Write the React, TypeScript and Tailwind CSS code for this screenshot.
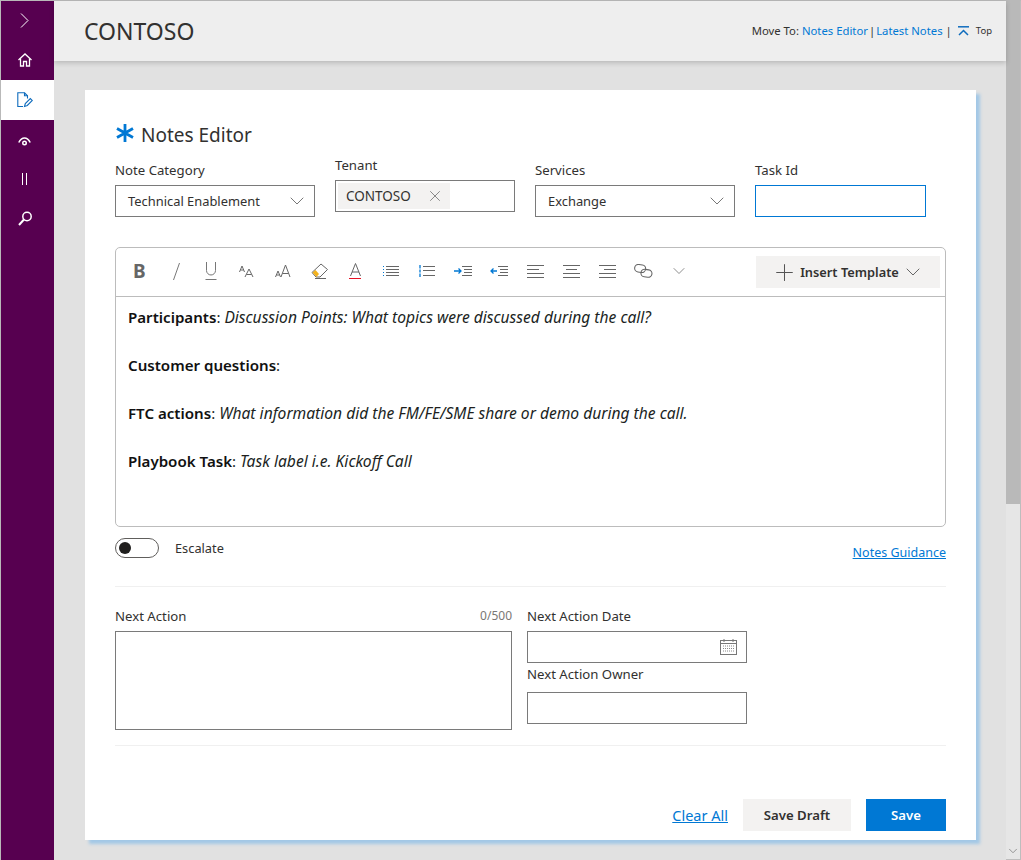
import React from 'react';
import { ChevronDown, X, Plus } from 'lucide-react';

const Label: React.FC<{ children: React.ReactNode; className?: string }> = ({ children, className }) => (
  <div className={`text-[13.2px] leading-[20px] text-[#323130] ${className ?? ''}`}>{children}</div>
);

const Lines: React.FC<{ rows: [number, number][] }> = ({ rows }) => (
  <svg width="17" height="13" viewBox="0 0 17 13" fill="none" stroke="#666" strokeWidth="1">
    {rows.map(([a, b], i) => (
      <line key={i} x1={a} x2={b} y1={i * 4 + 0.5} y2={i * 4 + 0.5} />
    ))}
  </svg>
);

const BulletList = () => (
  <svg width="16" height="11" viewBox="0 0 16 11" fill="none">
    <g stroke="#666">
      <line x1="3" x2="16" y1="0.5" y2="0.5" />
      <line x1="3" x2="16" y1="3.5" y2="3.500" />
      <line x1="3" x2="16" y1="6.5" y2="6.5" />
      <line x1="3" x2="16" y1="9.5" y2="9.5" />
    </g>
    <g fill="#0078d4">
      <rect x="0" y="0" width="1" height="1" />
      <rect x="0" y="3" width="1" height="1" />
      <rect x="0" y="6" width="1" height="1" />
      <rect x="0" y="9" width="1" height="1" />
    </g>
  </svg>
);

const NumberList = () => (
  <svg width="16" height="12" viewBox="0 0 16 12" fill="none">
    <g stroke="#666">
      <line x1="4" x2="16" y1="1.5" y2="1.5" />
      <line x1="4" x2="16" y1="5.5" y2="5.5" />
      <line x1="4" x2="16" y1="10.5" y2="10.5" />
    </g>
    <path d="M1 0v3.500M1 4.500v3M1 8.500v3.500" stroke="#0078d4" strokeWidth="1.300" />
  </svg>
);

const Indent: React.FC<{ reverse?: boolean }> = ({ reverse }) => (
  <svg width="18" height="10" viewBox="0 0 18 10" fill="none">
    <g stroke="#666">
      <line x1="8" x2="18" y1="0.5" y2="0.5" />
      <line x1="10" x2="18" y1="3.5" y2="3.5" />
      <line x1="10" x2="18" y1="6.5" y2="6.5" />
      <line x1="8" x2="18" y1="9.5" y2="9.5" />
    </g>
    {reverse ? (
      <path d="M7 5H1M3.500 2.500L1 5l2.500 2.500" stroke="#0078d4" strokeWidth="1.300" />
    ) : (
      <path d="M0 5h6.500M4.500 2.500L7 5l-2.500 2.500" stroke="#0078d4" strokeWidth="1.300" />
    )}
  </svg>
);

const SmallCaps: React.FC<{ big?: boolean }> = ({ big }) => (
  <svg width="16" height="14" viewBox="0 0 16 14" fill="none" stroke="#666" strokeWidth="1">
    {big ? (
      <>
        <path d="M0.500 13L3 7l2.500 6M1.500 11h3" />
        <path d="M6 13l4.500-12L15 13M7.500 9.500h6" />
      </>
    ) : (
      <>
        <path d="M0.500 8L3 2l2.500 6M1.500 6h3" />
        <path d="M6 13l4-8 4 8M7.500 10.500h5" />
      </>
    )}
  </svg>
);

const Eraser = () => (
  <svg width="18" height="16" viewBox="0 0 18 16" fill="none">
    <path d="M1 9.500L10 1l6.500 5.500L9 14H5z" stroke="#666" />
    <path d="M1.500 9.500L4.500 7l3.500 4-2.500 3z" fill="#f2b21d" />
    <line x1="4" x2="15" y1="15.500" y2="15.500" stroke="#666" />
  </svg>
);

const FontColor = () => (
  <svg width="13" height="16" viewBox="0 0 13 16" fill="none">
    <path d="M1.500 13L6.500 0.500 11.500 13M3 9h7" stroke="#666" />
    <rect x="0" y="15" width="12" height="1" fill="#e81123" />
  </svg>
);

const Underline = () => (
  <svg width="12" height="18" viewBox="0 0 12 18" fill="none" stroke="#777">
    <path d="M1.500 0v8.500a4.500 4.500 0 0 0 9 0V0" />
    <line x1="0.500" x2="11.500" y1="17.500" y2="17.500" />
  </svg>
);

const Chain = () => (
  <svg width="19" height="14" viewBox="0 0 19 14" fill="none" stroke="#666" strokeWidth="1.100">
    <rect x="0.700" y="0.700" width="11" height="7.500" rx="3.700" transform="rotate(8 6 4)" />
    <rect x="7" y="5.500" width="11" height="7.500" rx="3.700" transform="rotate(8 12 9)" />
  </svg>
);

const NoteEdit = () => (
  <svg width="16" height="16" viewBox="0 0 16 16" fill="none" stroke="#0f6cbd" strokeWidth="1.100">
    <path d="M6 14.500H0.800V0.800h6.700l3 3v2.700" />
    <path d="M7.500 0.800v3h3" />
    <path d="M7.500 14.500l0.800-3 5-5 2 2-5 5z" />
  </svg>
);

const HomeIcon = () => (
  <svg width="14" height="14" viewBox="0 0 14 14" fill="none" stroke="#fff" strokeWidth="1.300">
    <path d="M0.500 7L7 1l6.500 6" />
    <path d="M2.500 5.500V13H5.500V8.500H8.500V13H11.500V5.500" />
  </svg>
);

const WatchIcon = () => (
  <svg width="13" height="9" viewBox="0 0 13 9" fill="none">
    <path d="M0.800 5.500C2.500 2.200 4.500 1 6.500 1s4 1.200 5.700 4.500" stroke="#fff" strokeWidth="1.600" />
    <circle cx="6.500" cy="6" r="2.500" fill="#fff" />
    <circle cx="6.500" cy="6" r="1" fill="#570050" />
  </svg>
);

const PauseIcon = () => (
  <svg width="7" height="12" viewBox="0 0 7 12" stroke="#fff" strokeWidth="1">
    <path d="M1.500 0v12M5.500 0v12" />
  </svg>
);

const SearchIcon = () => (
  <svg width="14" height="15" viewBox="0 0 14 15" fill="none" stroke="#fff">
    <circle cx="9" cy="5.500" r="4.200" strokeWidth="1.500" />
    <path d="M6 8.500L1 14" strokeWidth="2" />
  </svg>
);

const TopIcon = () => (
  <svg width="11" height="10" viewBox="0 0 11 10" fill="none" stroke="#0f6cbd" strokeWidth="1.500">
    <path d="M0 0.800h11" />
    <path d="M1 9l4.500-4.500L10 9" />
  </svg>
);

const Calendar = () => (
  <svg width="17" height="16" viewBox="0 0 17 16" fill="none">
    <rect x="0.500" y="1.500" width="16" height="14" stroke="#777" />
    <line x1="0.500" x2="16.500" y1="4.500" y2="4.500" stroke="#777" />
    <path d="M4 0v3M13 0v3" stroke="#777" />
    <path d="M3 7h11M3 9.500h11M3 12h11" stroke="#8a8a8a" strokeDasharray="1 1" />
  </svg>
);

const App: React.FC = () => {
  return (
    <div className="h-[860px] w-[1021px] overflow-hidden bg-[#e1e1e1] font-['Noto_Sans',sans-serif] text-[#323130]">
      <div className="flex h-full border-t border-l border-[#b9b9b9]">
        {/* Sidebar */}
        <nav className="flex w-[53px] shrink-0 flex-col bg-[#570050] text-white">
          <div className="flex h-[39px] items-center justify-center pr-[6px]">
            <svg width="9" height="15" viewBox="0 0 9 15" fill="none" stroke="#fff"><path d="M1 0.500L8 7.500 1 14.500" /></svg>
          </div>
          <div className="flex h-[40px] items-center justify-center pr-[6px]"><HomeIcon /></div>
          <div className="flex h-[40px] items-center justify-center bg-white pr-[6px]"><NoteEdit /></div>
          <div className="flex h-[42px] items-center justify-center pr-[6px]"><WatchIcon /></div>
          <div className="flex h-[34px] items-center justify-center pr-[6px]"><PauseIcon /></div>
          <div className="flex h-[44px] items-center justify-center pr-[6px]"><SearchIcon /></div>
        </nav>

        <div className="flex min-w-0 flex-1 flex-col">
          {/* Header */}
          <header className="z-10 flex h-[60px] shrink-0 items-center justify-between bg-[#eeeeee] pr-[14px] pl-[30px] shadow-[0_2px_5px_rgba(0,0,0,0.18)]">
            <h1 className="text-[23px] leading-none text-[#323130]">CONTOSO</h1>
            <div className="flex items-center text-[11.300px] text-[#323130]">
              <span>Move To:</span>
              <a className="ml-[3px] text-[#0078d4]">Notes Editor</a>
              <span className="mx-[1px]">|</span>
              <a className="text-[#0078d4]">Latest Notes</a>
              <span className="ml-[3px]">|</span>
              <span className="ml-[6px] flex"><TopIcon /></span>
              <span className="ml-[7px] text-[9.500px]">Top</span>
            </div>
          </header>

          {/* Card */}
          <main className="flex-1 pt-[29px] pl-[31px]">
            <div className="h-[750px] w-[891px] bg-white px-[30px] pt-[30px] shadow-[4px_4px_3px_#a3c8e6]">
              <div className="flex h-[30px] items-center">
                <span className="mt-[-4px] flex w-[26px]">
                  <svg width="20" height="20" viewBox="0 0 20 20" stroke="#0078d4" strokeWidth="2.800">
                    <path d="M10 1v18M2 5.500l16 9M18 5.500l-16 9" />
                  </svg>
                </span>
                <h2 className="text-[19px] text-[#323130]">Notes Editor</h2>
              </div>

              {/* Fields */}
              <div className="mt-[5px] flex items-start">
                <div className="mt-[5px] w-[200px]">
                  <Label>Note Category</Label>
                  <div className="mt-[5px] flex h-[32px] items-center justify-between border border-[#7a7a7a] pt-[2px] pr-[5px] pl-[12px] text-[12.900px]">
                    Technical Enablement
                    <ChevronDown className="-mt-[2px] h-[24px] w-[24px] text-[#777]" strokeWidth={1} />
                  </div>
                </div>
                <div className="ml-[20px] w-[180px]">
                  <Label>Tenant</Label>
                  <div className="mt-[5px] flex h-[32px] items-center border border-[#7a7a7a] pl-[2px]">
                    <span className="flex h-[26px] w-[112px] items-center justify-between bg-[#f3f2f1] pr-[6px] pl-[8px] text-[13.500px]">
                      CONTOSO
                      <X className="h-[18px] w-[18px] text-[#666]" strokeWidth={1} />
                    </span>
                  </div>
                </div>
                <div className="mt-[5px] ml-[20px] w-[200px]">
                  <Label>Services</Label>
                  <div className="mt-[5px] flex h-[32px] items-center justify-between border border-[#7a7a7a] pt-[2px] pr-[5px] pl-[12px] text-[12.900px]">
                    Exchange
                    <ChevronDown className="-mt-[2px] h-[24px] w-[24px] text-[#777]" strokeWidth={1} />
                  </div>
                </div>
                <div className="mt-[5px] ml-[20px] w-[171px]">
                  <Label>Task Id</Label>
                  <div className="mt-[5px] h-[32px] border border-[#0078d4]" />
                </div>
              </div>

              {/* Editor */}
              <div className="mt-[30px] h-[280px] w-[831px] rounded-[5px] border border-[#bcbcbc]">
                <div className="flex h-[49px] items-center border-b border-[#bcbcbc] pr-[5px] pl-[17px]">
                  <div className="-mt-[2px] flex flex-1 items-center text-[#666]">
                    <span className="w-[14px] text-[19px] leading-none font-bold">B</span>
                    <svg className="ml-[26px]" width="7" height="17" viewBox="0 0 7 17" stroke="#777"><path d="M6.500 0L0.500 17" /></svg>
                    <span className="ml-[25px] flex"><Underline /></span>
                    <span className="ml-[22px] flex"><SmallCaps /></span>
                    <span className="ml-[20px] flex"><SmallCaps big /></span>
                    <span className="ml-[20px] flex"><Eraser /></span>
                    <span className="ml-[20px] flex"><FontColor /></span>
                    <span className="ml-[21px] flex"><BulletList /></span>
                    <span className="ml-[20px] flex"><NumberList /></span>
                    <span className="ml-[19px] flex"><Indent /></span>
                    <span className="ml-[18px] flex"><Indent reverse /></span>
                    <span className="ml-[19px] flex"><Lines rows={[[0, 17], [0, 12], [0, 17], [0, 17]]} /></span>
                    <span className="ml-[19px] flex"><Lines rows={[[0, 17], [3, 14], [0, 17], [0, 17]]} /></span>
                    <span className="ml-[19px] flex"><Lines rows={[[0, 17], [5, 17], [0, 17], [0, 17]]} /></span>
                    <span className="ml-[18px] flex"><Chain /></span>
                    <ChevronDown className="ml-[16px] h-[20px] w-[20px] text-[#777]" strokeWidth={1} />
                  </div>
                  <button className="flex h-[32px] w-[184px] items-center justify-center bg-[#f3f2f1] text-[12.800px] font-semibold text-[#323130]">
                    <Plus className="mr-[2px] h-[27px] w-[27px] text-[#555]" strokeWidth={0.9} />
                    <span className="pt-[2px]">Insert Template</span>
                    <ChevronDown className="ml-[2px] h-[24px] w-[24px] text-[#666]" strokeWidth={1} />
                  </button>
                </div>
                <div className="px-[12px] pt-[8px] text-[15.100px] leading-[24px] text-[#201f1e]">
                  <p><b className="font-semibold text-[#111]">Participants</b>: <i className="text-[15.600px]">Discussion Points: What topics were discussed during the call?</i></p>
                  <p className="mt-[24px]"><b className="font-semibold text-[#111]">Customer questions</b>:</p>
                  <p className="mt-[24px]"><b className="font-semibold text-[#111]">FTC actions</b>: <i className="text-[15.600px]">What information did the FM/FE/SME share or demo during the call.</i></p>
                  <p className="mt-[24px]"><b className="font-semibold text-[#111]">Playbook Task</b>: <i className="text-[15.600px]">Task label i.e. Kickoff Call</i></p>
                </div>
              </div>

              {/* Escalate */}
              <div className="mt-[11px] flex h-[25px] w-[831px] items-start justify-between">
                <div className="flex items-center">
                  <span className="flex h-[20px] w-[44px] items-center rounded-full border border-[#605e5c] pl-[3px]">
                    <span className="h-[12px] w-[12px] rounded-full bg-[#201f1e]" />
                  </span>
                  <span className="mt-[1px] ml-[16px] text-[12.800px]">Escalate</span>
                </div>
                <a className="mt-[6px] text-[12.500px] text-[#0078d4] underline">Notes Guidance</a>
              </div>

              <div className="mt-[23px] h-px w-[831px] bg-[#f0f0f0]" />

              {/* Next action */}
              <div className="mt-[19px] flex items-start">
                <div className="w-[397px]">
                  <div className="flex items-center justify-between">
                    <Label>Next Action</Label>
                    <span className="text-[12px] text-[#797775]">0/500</span>
                  </div>
                  <div className="mt-[5px] h-[99px] border border-[#7a7a7a]" />
                </div>
                <div className="ml-[15px] w-[220px]">
                  <Label>Next Action Date</Label>
                  <div className="mt-[5px] flex h-[32px] items-center justify-end border border-[#7a7a7a] pr-[9px]"><Calendar /></div>
                  <Label className="mt-[1px]">Next Action Owner</Label>
                  <div className="mt-[8px] h-[32px] border border-[#7a7a7a]" />
                </div>
              </div>

              <div className="mt-[15px] h-px w-[831px] bg-[#f0f0f0]" />

              {/* Actions */}
              <div className="mt-[53px] flex w-[831px] items-center justify-end">
                <a className="mt-[1px] text-[14.500px] text-[#0078d4] underline">Clear All</a>
                <button className="ml-[15px] h-[32px] w-[108px] bg-[#f3f2f1] pt-[2px] text-[13.200px] font-semibold text-[#323130]">Save Draft</button>
                <button className="ml-[15px] h-[32px] w-[80px] bg-[#0078d4] pt-[2px] text-[13.200px] font-semibold text-white">Save</button>
              </div>
            </div>
          </main>
        </div>

        {/* Scrollbar */}
        <div className="flex w-[15px] shrink-0 flex-col border-r border-b border-[#bdbdbd] bg-[#e6e6e6]">
          <div className="h-[503px] bg-[#b9b9b9]" />
          <div className="flex-1" />
          <ChevronDown className="mb-[1px] h-[14px] w-[14px] text-[#888]" strokeWidth={1.500} />
        </div>
      </div>
    </div>
  );
};

export default App;
